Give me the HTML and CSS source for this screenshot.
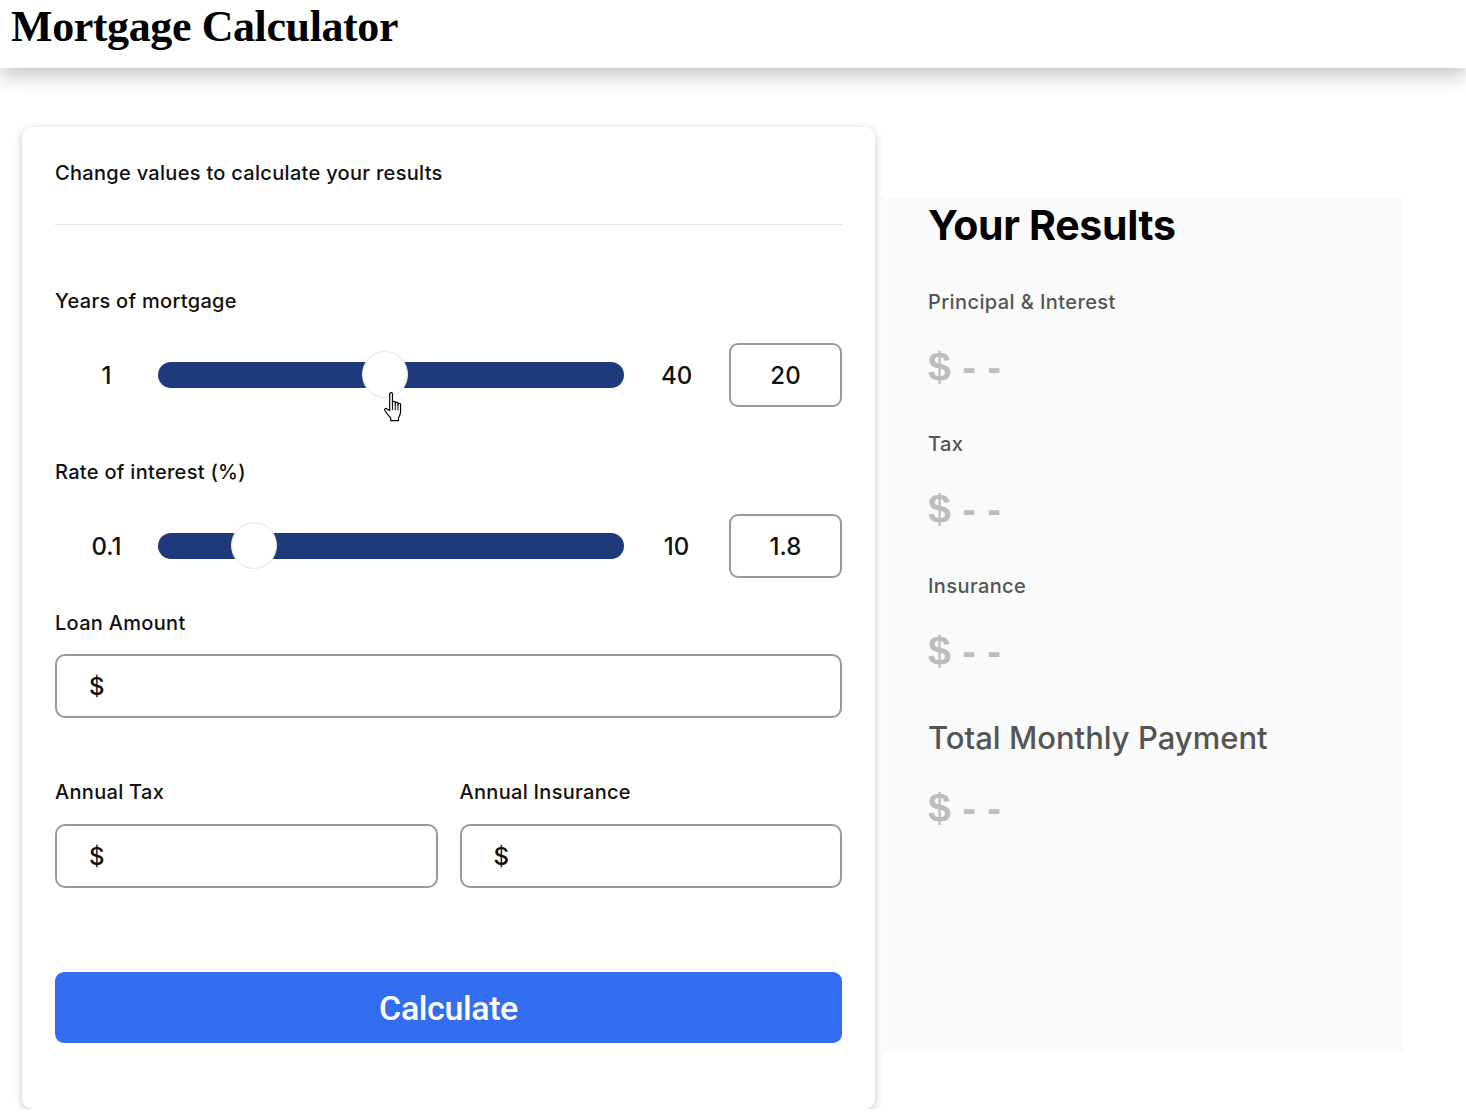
FILE: index.html
```html
<!DOCTYPE html>
<html lang="en">
<head>
<meta charset="utf-8">
<title>Mortgage Calculator</title>
<link rel="stylesheet" href="styles.css">
</head>
<body>
<header class="topbar">
  <h1 class="brand">Mortgage Calculator</h1>
</header>
<main class="layout">
  <section class="card">
    <p class="intro">Change values to calculate your results</p>
    <hr class="divider">

    <label class="field-label first">Years of mortgage</label>
    <div class="slider-row">
      <span class="bound">1</span>
      <div class="track">
        <span class="thumb" style="left:48.8%"></span>
        <svg class="cursor" width="28" height="36" viewBox="0 0 26 34">
          <path d="M8 3.5c0-1.4 2.6-1.4 2.6 0V14l.1-2.4c0-1.3 2.5-1.3 2.5 0v2.6l.1-1.8c0-1.3 2.5-1.3 2.5 0v2.3l.1-1.2c0-1.3 2.4-1.3 2.4 0v6.3c0 3.2-.8 4.8-2 6.6v2.6H9v-2.4c-1.4-1.5-3.9-4.6-5.6-7.2-.8-1.3.9-2.6 2-1.5L8 19.3z" fill="#fff" stroke="#000" stroke-width="1.1" stroke-linejoin="round"/>
          <path d="M10.6 14v5M13.2 14.2v5M15.8 14.4v5" stroke="#000" stroke-width="0.9"/>
        </svg>
      </div>
      <span class="bound max">40</span>
      <div class="value-box">20</div>
    </div>

    <label class="field-label">Rate of interest (%)</label>
    <div class="slider-row">
      <span class="bound">0.1</span>
      <div class="track">
        <span class="thumb" style="left:20.6%"></span>
      </div>
      <span class="bound max">10</span>
      <div class="value-box">1.8</div>
    </div>

    <label class="field-label loan">Loan Amount</label>
    <div class="money-input">$</div>

    <div class="pair">
      <div class="pair-col">
        <label class="field-label">Annual Tax</label>
        <div class="money-input">$</div>
      </div>
      <div class="pair-col">
        <label class="field-label">Annual Insurance</label>
        <div class="money-input">$</div>
      </div>
    </div>

    <button class="calc-btn" type="button">Calculate</button>
  </section>

  <aside class="results">
    <h2 class="results-title">Your Results</h2>
    <p class="result-label">Principal &amp; Interest</p>
    <p class="result-value">$ - -</p>
    <p class="result-label">Tax</p>
    <p class="result-value">$ - -</p>
    <p class="result-label">Insurance</p>
    <p class="result-value">$ - -</p>
    <p class="total-label">Total Monthly Payment</p>
    <p class="result-value total">$ - -</p>
  </aside>
</main>
</body>
</html>
```

FILE: styles.css
```css
* { box-sizing: border-box; }

html, body {
  margin: 0;
  padding: 0;
  background: #fff;
  font-family: Inter, "Noto Sans", "Liberation Sans", sans-serif;
  color: #111;
}

.topbar {
  height: 68px;
  background: #fff;
  box-shadow: 0 8px 18px rgba(0, 0, 0, 0.22);
  position: relative;
  z-index: 2;
  padding-left: 11px;
}

.brand {
  margin: 0;
  font-family: "Liberation Serif", "DejaVu Serif", serif;
  font-weight: 700;
  font-size: 44px;
  letter-spacing: -0.4px;
  line-height: 54px;
  color: #000;
}

.layout {
  display: flex;
  align-items: flex-start;
  padding-left: 22px;
  padding-top: 59px;
}

.card {
  width: 853px;
  background: #fff;
  border-radius: 10px;
  box-shadow: 0 2px 8px rgba(0, 0, 0, 0.22);
  padding: 33px 33px 66px 33px;
  position: relative;
  z-index: 1;
}

.intro {
  margin: 0;
  font-size: 20px;
  line-height: 26px;
  font-weight: 500;
  letter-spacing: 0.3px;
}

.divider {
  margin: 38px 0 0 0;
  border: 0;
  border-top: 1px solid #e2e2e2;
  height: 0;
}

.field-label {
  display: block;
  font-size: 20px;
  line-height: 26px;
  font-weight: 500;
  letter-spacing: 0.3px;
  margin-top: 52px;
}
.field-label.first { margin-top: 63px; }
.field-label.loan { margin-top: 32px; }

.slider-row {
  display: flex;
  align-items: center;
  margin-top: 29px;
  height: 64px;
}

.bound {
  width: 103px;
  text-align: center;
  font-size: 24px;
  font-weight: 500;
}
.bound.max { width: 105px; }

.track {
  position: relative;
  width: 466px;
  height: 26px;
  background: #1e3a7b;
  border-radius: 13px;
}

.thumb {
  position: absolute;
  top: 50%;
  width: 46px;
  height: 47px;
  margin-left: -23px;
  margin-top: -24px;
  border-radius: 50%;
  background: #fff;
  border: 1px solid #e6e6e6;
}

.cursor {
  position: absolute;
  left: 223px;
  top: 28px;
}

.value-box {
  width: 113px;
  height: 64px;
  border: 2px solid #9a9a9a;
  border-radius: 9px;
  display: flex;
  align-items: center;
  justify-content: center;
  font-size: 24px;
  font-weight: 500;
}

.money-input {
  margin-top: 18px;
  height: 64px;
  border: 2px solid #9a9a9a;
  border-radius: 10px;
  display: flex;
  align-items: center;
  padding-left: 32px;
  font-size: 24px;
  font-weight: 500;
}

.pair {
  display: flex;
  gap: 22px;
  margin-top: 41px;
}
.pair-col { flex: 1; }
.pair .field-label { margin-top: 20px; }
.pair .money-input { margin-top: 19px; }

.calc-btn {
  display: block;
  width: 100%;
  height: 71px;
  margin-top: 84px;
  border: 0;
  border-radius: 9px;
  background: #346ef0;
  color: #fff;
  font-family: Roboto, "Liberation Sans", sans-serif;
  font-size: 34px;
  font-weight: 500;
  letter-spacing: -0.4px;
}

.results {
  width: 520px;
  height: 853px;
  margin-top: 71px;
  margin-left: 8px;
  background: #fafafa;
  padding: 3px 45px 0 45px;
}

.results-title {
  margin: 0;
  font-size: 41px;
  line-height: 48px;
  font-weight: 700;
  color: #000;
  letter-spacing: -0.3px;
}

.result-label {
  margin: 40px 0 0 0;
  font-size: 20px;
  line-height: 26px;
  font-weight: 500;
  letter-spacing: 0.4px;
  color: #555;
}

.result-value {
  margin: 28px 0 0 0;
  font-family: "Liberation Sans", Arial, sans-serif;
  font-size: 41px;
  line-height: 48px;
  font-weight: 700;
  color: #bdbdbd;
  white-space: pre;
}

.total-label {
  margin: 43px 0 0 0;
  font-size: 31px;
  line-height: 40px;
  font-weight: 500;
  color: #555;
}

.result-value.total { margin-top: 26px; }
```
